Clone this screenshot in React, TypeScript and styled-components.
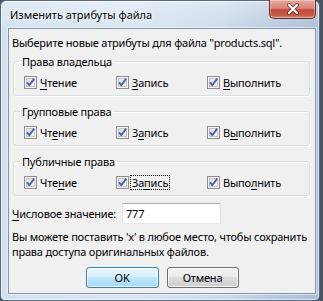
import React from "react";
import styled, { createGlobalStyle } from "styled-components";

const Global = createGlobalStyle`
  html, body { margin: 0; padding: 0; }
  body {
    background: #4a5666;
    font-family: "Noto Sans", "Segoe UI", sans-serif;
    font-size: 11px;
    color: #000;
  }
`;

const Desktop = styled.div`
  width: 323px;
  height: 301px;
  display: flex;
  align-items: flex-start;
  overflow: hidden;
`;

const Window = styled.div`
  box-sizing: border-box;
  width: 320px;
  height: 301px;
  display: flex;
  flex-direction: column;
  border: 1px solid #5b6b7e;
  border-radius: 6px 6px 5px 5px;
  background:
    linear-gradient(180deg, rgba(255,255,255,0.35) 0%, rgba(255,255,255,0) 30px),
    linear-gradient(90deg, #d3e1f0 0%, #d9e5f2 40%, #cbdaeb 70%, #b5c8de 88%, #aabed5 100%);
  box-shadow: inset 0 0 0 1px rgba(255,255,255,0.55);
`;

const TitleBar = styled.div`
  height: 27px;
  display: flex;
  align-items: flex-start;
  flex-shrink: 0;
`;

const Title = styled.div`
  padding: 7px 0 0 9px;
  font-size: 11px;
  line-height: 14px;
  color: #000;
  text-shadow: 0 0 6px rgba(255,255,255,0.95), 0 0 3px rgba(255,255,255,0.9);
`;

const CloseButton = styled.div`
  box-sizing: border-box;
  margin: -1px 3px 0 auto;
  width: 47px;
  height: 19px;
  border: 1px solid #6b2a22;
  border-top: none;
  border-radius: 0 0 5px 5px;
  background: linear-gradient(180deg, #e9a99c 0%, #d9837a 45%, #c34b3b 55%, #c7584a 85%, #d98a73 100%);
  box-shadow: inset 0 0 0 1px rgba(255,255,255,0.35);
  display: flex;
  align-items: center;
  justify-content: center;
`;

const Client = styled.div`
  box-sizing: border-box;
  margin: 0 3px 0 7px;
  height: 266px;
  border: 1px solid #8496ac;
  background: #f0f0f0;
  padding: 7px 5px 5px 3px;
  display: flex;
  flex-direction: column;
  box-shadow: 0 0 0 1px rgba(255,255,255,0.5);
`;

const Intro = styled.div`
  line-height: 14px;
  height: 14px;
  white-space: nowrap;
  letter-spacing: -0.2px;
`;

const Group = styled.fieldset<{ $first?: boolean }>`
  box-sizing: border-box;
  margin: ${(p) => (p.$first ? 5 : 9)}px 0 0 1px;
  height: 41px;
  padding: 7px 0 5px 10px;
  border: 1px solid #d5dfe5;
  border-radius: 3px;
  box-shadow: inset 1px 1px 0 #fff, 1px 1px 0 #fff;
  min-width: 0;
`;

const Legend = styled.legend`
  margin-left: -4px;
  padding: 0 2px;
  line-height: 13px;
  height: 13px;
  letter-spacing: -0.2px;
`;

const Row = styled.div`
  display: grid;
  grid-template-columns: 92px 91px 1fr;
  height: 15px;
  align-items: center;
`;

const Check = styled.label`
  display: flex;
  align-items: center;
  gap: 2px;
  white-space: nowrap;
  letter-spacing: -0.2px;
`;

const CheckText = styled.span<{ $focused?: boolean }>`
  line-height: 13px;
  padding: 0 1px;
  outline: ${(p) => (p.$focused ? "1px dotted #000" : "none")};
  outline-offset: 0px;
`;

const Key = styled.u`
  text-decoration: underline;
  text-underline-offset: 2px;
`;

const ValueRow = styled.div`
  margin-top: 7px;
  display: flex;
  align-items: center;
  height: 21px;
`;

const ValueLabel = styled.label`
  width: 110px;
  white-space: nowrap;
  letter-spacing: -0.2px;
`;

const Input = styled.div`
  box-sizing: border-box;
  width: 99px;
  height: 21px;
  background: #fff;
  border: 1px solid #e2e3ea;
  border-top-color: #abadb3;
  border-bottom-color: #e3e9ef;
  padding: 0 0 0 3px;
  display: flex;
  align-items: center;
  letter-spacing: -0.2px;
`;

const Note = styled.div`
  margin-top: 5px;
  line-height: 15px;
  white-space: nowrap;
  letter-spacing: -0.2px;
`;

const Buttons = styled.div`
  margin-top: 8px;
  padding-left: 2px;
  display: flex;
  justify-content: center;
  gap: 8px;
`;

const Button = styled.div<{ $default?: boolean; $w: number }>`
  box-sizing: border-box;
  width: ${(p) => p.$w}px;
  height: 21px;
  border: 1px solid ${(p) => (p.$default ? "#3c7fb1" : "#707070")};
  border-radius: 3px;
  display: flex;
  align-items: center;
  justify-content: center;
  letter-spacing: -0.2px;
  background: ${(p) =>
    p.$default
      ? "linear-gradient(180deg, #eaf6fd 0%, #d9f0fc 49%, #bee6fd 50%, #a7d9f5 100%)"
      : "linear-gradient(180deg, #f2f2f2 0%, #ebebeb 49%, #dddddd 50%, #cfcfcf 100%)"};
  box-shadow: inset 0 0 0 1px rgba(255,255,255,0.75);
`;

function CheckBox() {
  return (
    <svg width="13" height="13" viewBox="0 0 13 13">
      <defs>
        <linearGradient id="cbg" x1="0" y1="0" x2="1" y2="1">
          <stop offset="0" stopColor="#dcdcdc" />
          <stop offset="1" stopColor="#fbfbfb" />
        </linearGradient>
      </defs>
      <rect x="0.5" y="0.5" width="12" height="12" fill="#f4f4f4" stroke="#8e8f8f" />
      <rect x="2.5" y="2.5" width="8" height="8" fill="url(#cbg)" stroke="#c4c8cd" />
      <path d="M3 6.3 L5.3 9.2 L10.2 2.6" fill="none" stroke="#4d5fa8" strokeWidth="1.9" strokeLinejoin="round" />
    </svg>
  );
}

type Item = { pre: string; key: string; post: string; focused?: boolean };

function Option({ item }: { item: Item }) {
  return (
    <Check>
      <CheckBox />
      <CheckText $focused={item.focused}>
        {item.pre}
        <Key>{item.key}</Key>
        {item.post}
      </CheckText>
    </Check>
  );
}

const groups: { title: string; items: Item[] }[] = [
  {
    title: "Права владельца",
    items: [
      { pre: "", key: "Ч", post: "тение" },
      { pre: "", key: "З", post: "апись" },
      { pre: "", key: "В", post: "ыполнить" },
    ],
  },
  {
    title: "Групповые права",
    items: [
      { pre: "Чт", key: "е", post: "ние" },
      { pre: "З", key: "а", post: "пись" },
      { pre: "В", key: "ы", post: "полнить" },
    ],
  },
  {
    title: "Публичные права",
    items: [
      { pre: "Чте", key: "н", post: "ие" },
      { pre: "За", key: "п", post: "ись", focused: true },
      { pre: "Выпо", key: "л", post: "нить" },
    ],
  },
];

export default function App() {
  return (
    <Desktop>
      <Global />
      <Window>
        <TitleBar>
          <Title>Изменить атрибуты файла</Title>
          <CloseButton>
            <svg width="14" height="12" viewBox="0 0 14 12">
              <path d="M3 2 L11 10 M11 2 L3 10" stroke="#5a1b12" strokeWidth="4" strokeLinecap="round" opacity="0.6" />
              <path d="M3 2 L11 10 M11 2 L3 10" stroke="#fff" strokeWidth="2.2" strokeLinecap="round" />
            </svg>
          </CloseButton>
        </TitleBar>
        <Client>
          <Intro>Выберите новые атрибуты для файла "products.sql".</Intro>
          {groups.map((g, i) => (
            <Group key={g.title} $first={i === 0}>
              <Legend>{g.title}</Legend>
              <Row>
                {g.items.map((it) => (
                  <Option key={it.pre + it.key + it.post} item={it} />
                ))}
              </Row>
            </Group>
          ))}
          <ValueRow>
            <ValueLabel>
              <Key>Ч</Key>исловое значение:
            </ValueLabel>
            <Input>777</Input>
          </ValueRow>
          <Note>
            Вы можете поставить 'x' в любое место, чтобы сохранить
            <br />
            права доступа оригинальных файлов.
          </Note>
          <Buttons>
            <Button $default $w={73}>OK</Button>
            <Button $w={72}>Отмена</Button>
          </Buttons>
        </Client>
      </Window>
    </Desktop>
  );
}
